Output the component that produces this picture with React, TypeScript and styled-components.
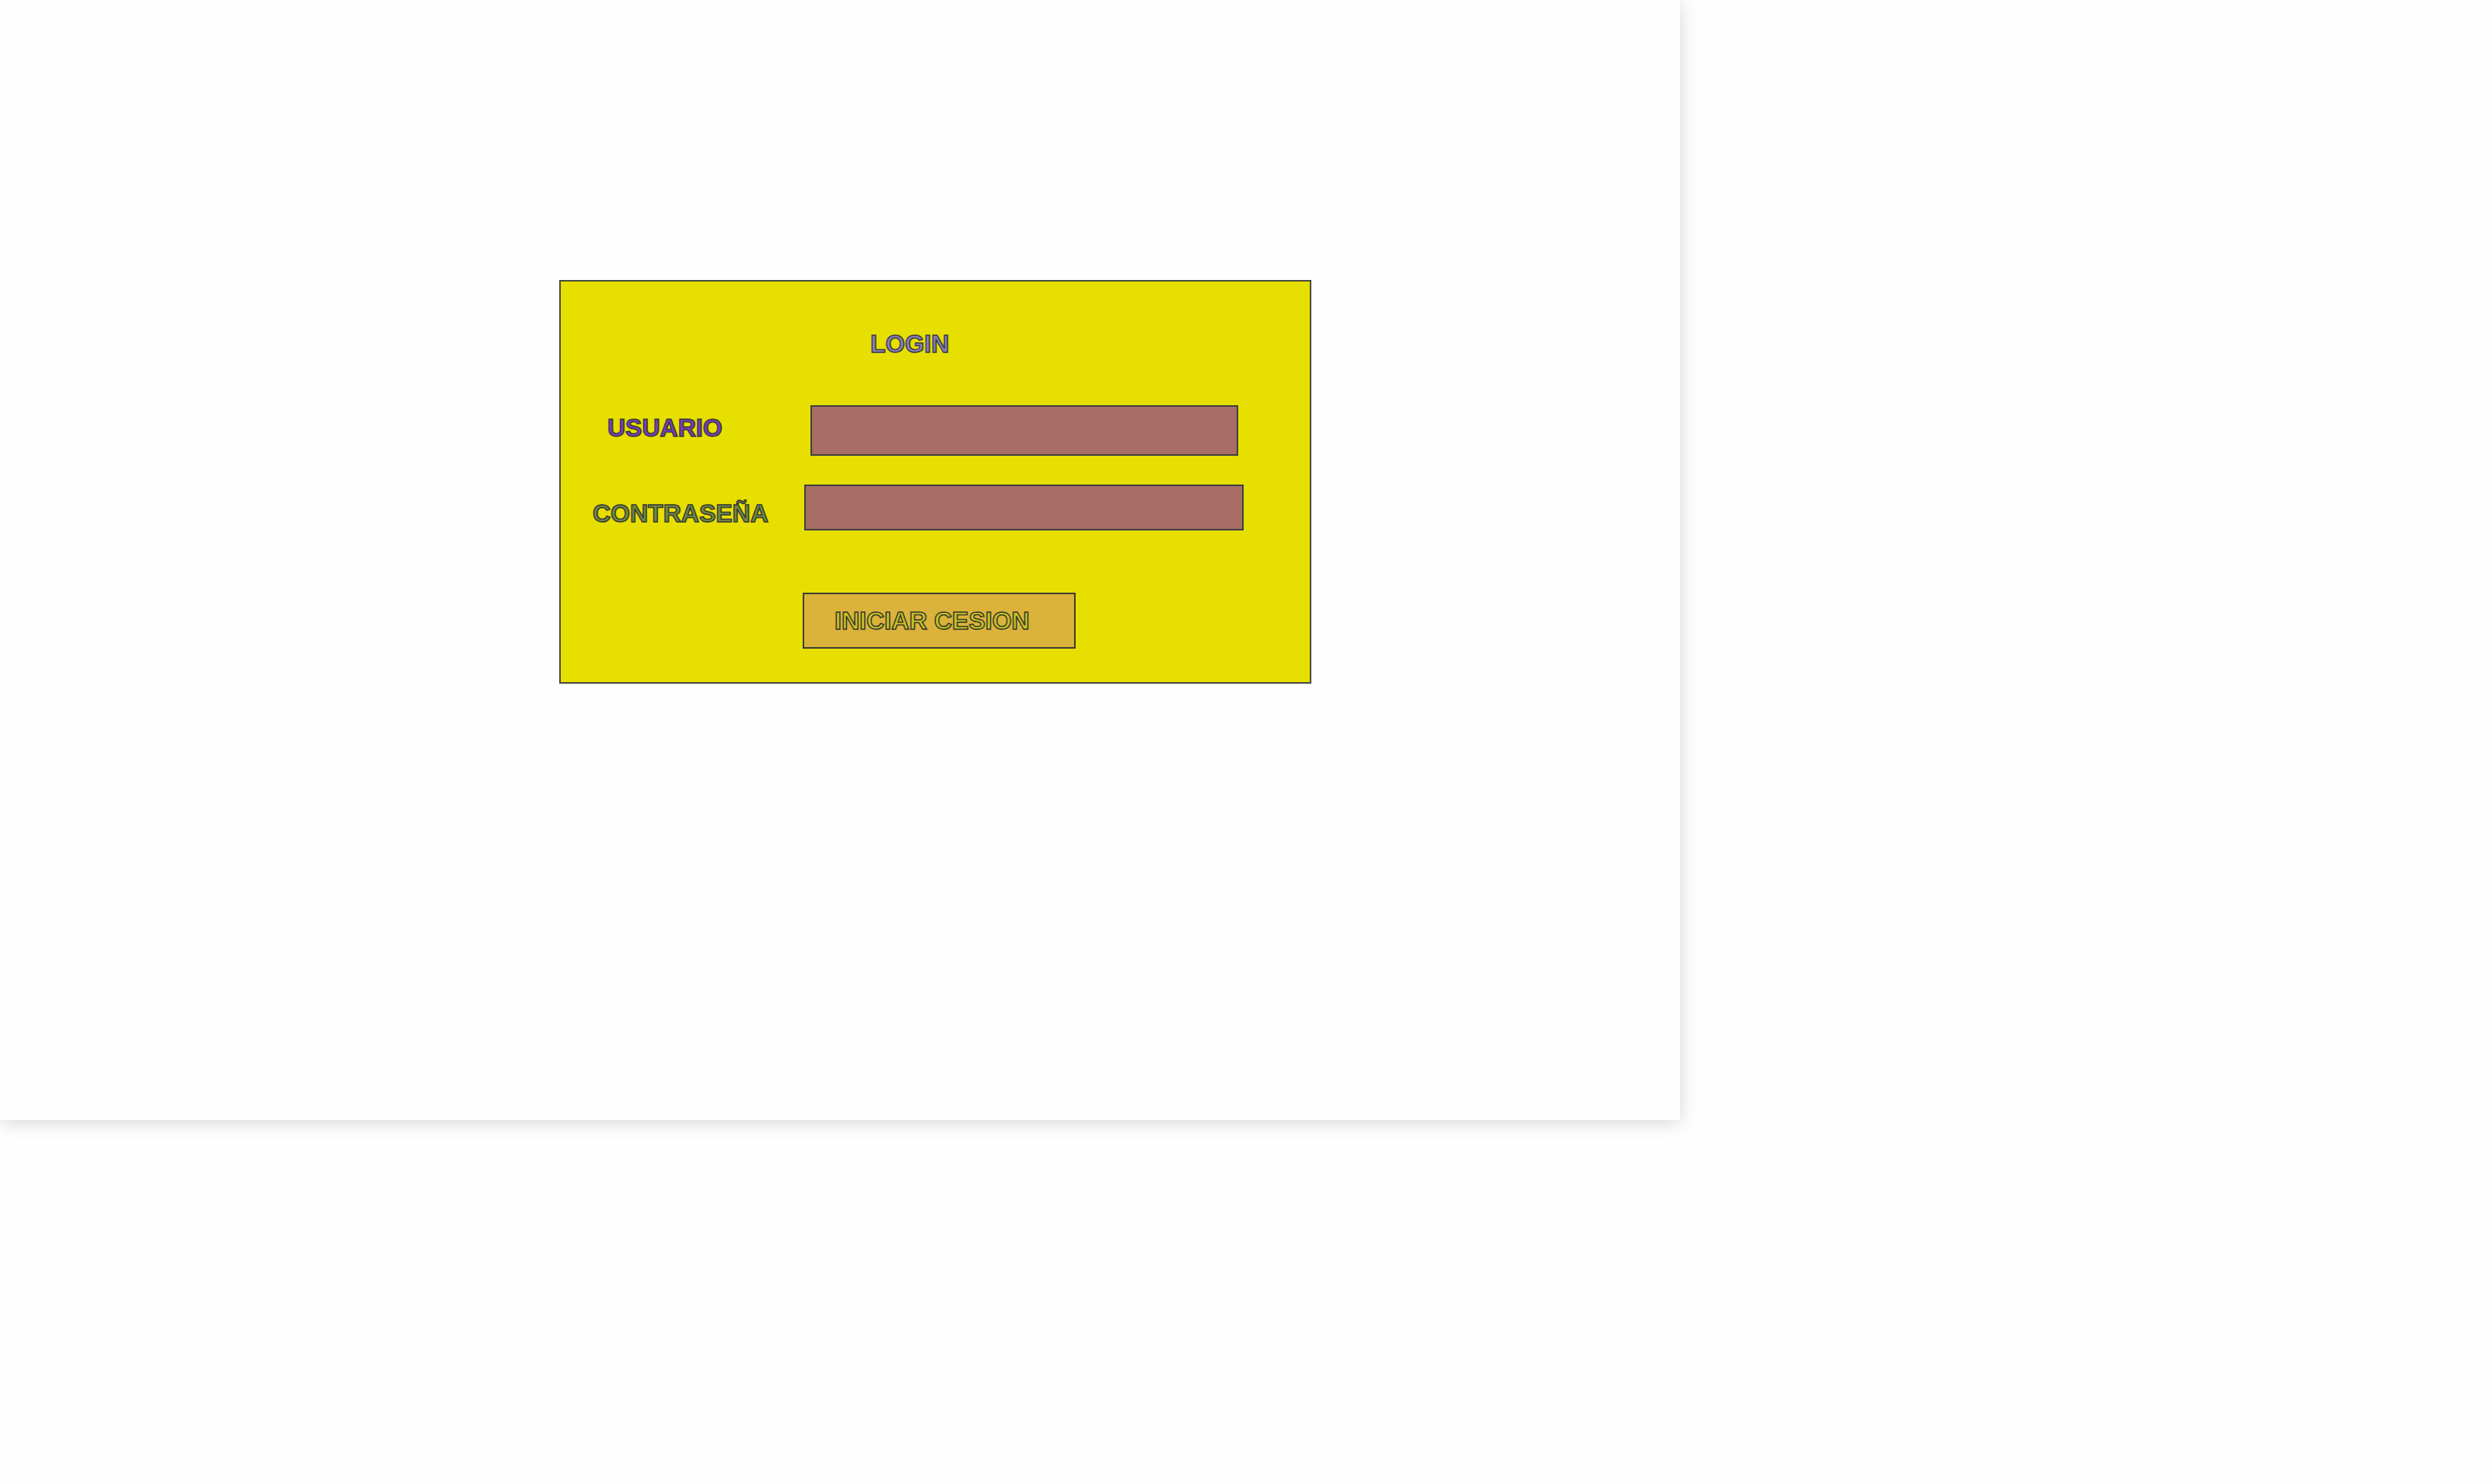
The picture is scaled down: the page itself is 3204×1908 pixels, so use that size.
import React from 'react';
import styled, { createGlobalStyle } from 'styled-components';

const GlobalStyle = createGlobalStyle`
	html, body {
		margin: 0;
		padding: 0;
		background: #fefefe;
	}
	* {
		box-sizing: border-box;
	}
`;

const Page = styled.div`
	padding-bottom: 60px;
	min-height: 100vh;
`;

const Sheet = styled.div`
	width: 2160px;
	height: 1440px;
	background: #fefefe;
	border-radius: 0 0 4px 0;
	box-shadow: 0 3px 24px rgba(0, 0, 0, 0.16);
	padding: 360px 0 0 719px;
`;

const Panel = styled.form`
	width: 967px;
	height: 519px;
	background: #e7df00;
	border: 2px solid #4a4a3e;
	display: flex;
	flex-direction: column;
	align-items: flex-start;
	padding-top: 64px;
	font-family: 'Liberation Sans', Arial, sans-serif;
`;

const Title = styled.h1`
	margin: 0 0 0 398px;
	font-size: 32px;
	font-weight: 700;
	line-height: 1;
	color: #8a80b6;
	-webkit-text-stroke: 1.5px #3c3c48;
`;

const Row = styled.div<{ $top: number }>`
	display: flex;
	align-items: flex-start;
	margin-top: ${p => p.$top}px;
`;

const Label = styled.label<{ $left: number; $width: number; $drop: number; $fill: string }>`
	margin-left: ${p => p.$left}px;
	margin-top: ${p => p.$drop}px;
	width: ${p => p.$width}px;
	font-size: 32px;
	font-weight: 700;
	line-height: 1;
	color: ${p => p.$fill};
	-webkit-text-stroke: 1.5px #3a3a36;
`;

const Field = styled.input<{ $w: number; $h: number }>`
	width: ${p => p.$w}px;
	height: ${p => p.$h}px;
	background: #a86e66;
	border: 2px solid #3f3f3f;
	outline: none;
	padding: 0 10px;
	margin: 0;
	font-size: 24px;
`;

const SubmitButton = styled.button`
	margin: 80px 0 0 311px;
	width: 351px;
	height: 72px;
	background: #dbb33a;
	border: 2px solid #3e3e30;
	border-radius: 0;
	display: flex;
	align-items: center;
	padding: 0 0 0 39px;
	font-family: 'Liberation Sans', Arial, sans-serif;
	font-size: 32px;
	font-weight: 700;
	line-height: 1;
	color: #c6c41e;
	-webkit-text-stroke: 1.5px #3a3a30;
	cursor: pointer;
`;

const App: React.FC = () => {
	return (
		<Page>
			<GlobalStyle />
			<Sheet>
				<Panel onSubmit={e => e.preventDefault()}>
					<Title>LOGIN</Title>
					<Row $top={63}>
						<Label $left={60} $width={261} $drop={13} $fill='#7b3cc0'>
							USUARIO
						</Label>
						<Field $w={550} $h={65} />
					</Row>
					<Row $top={37}>
						<Label $left={41} $width={272} $drop={21} $fill='#6e8a3e'>
							CONTRASEÑA
						</Label>
						<Field type='password' $w={565} $h={59} />
					</Row>
					<SubmitButton type='submit'>INICIAR CESION</SubmitButton>
				</Panel>
			</Sheet>
		</Page>
	);
};

export default App;
